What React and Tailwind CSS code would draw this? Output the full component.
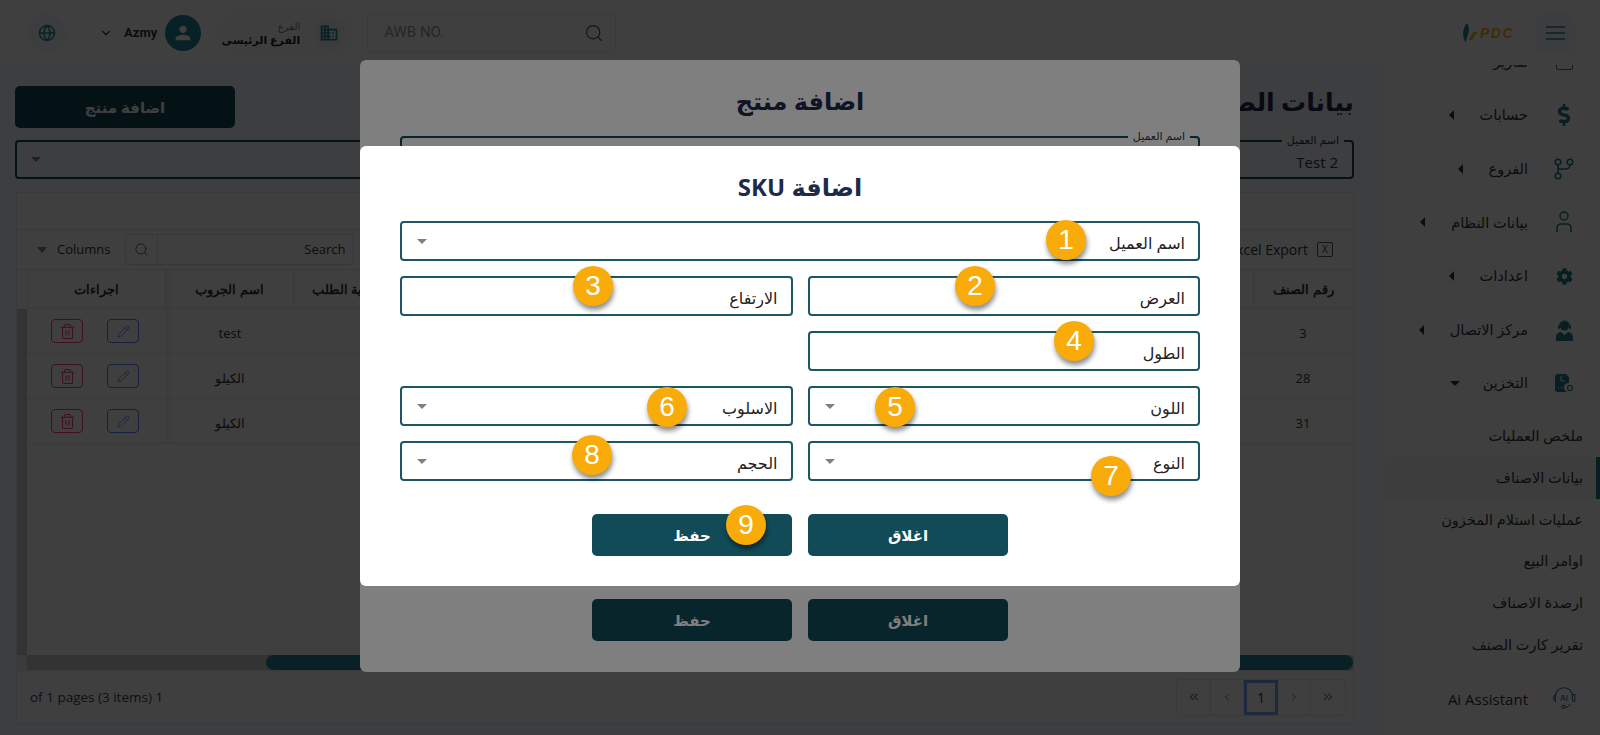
import React from 'react'
import { ChevronDown, ChevronLeft, ChevronRight, ChevronsLeft, ChevronsRight, Globe, Pencil, Search, Trash2 } from 'lucide-react'
import { FaCog, FaDollarSign } from 'react-icons/fa'
import { MdDomain, MdPerson } from 'react-icons/md'

const Caret = ({ dir = 'down', dark = false, className = '' }) => {
  if (dir === 'left') {
    return <span className={`inline-block w-0 h-0 border-y-[5px] border-y-transparent border-r-[5px] border-r-[#333] ${className}`}></span>
  }
  return <span className={`inline-block w-0 h-0 border-x-[5px] border-x-transparent border-t-[5px] ${dark ? 'border-t-[#333]' : 'border-t-[#808080]'} ${className}`}></span>
}

const BranchIcon = () => (
  <svg width="20" height="22" viewBox="0 0 20 22" fill="none" stroke="#1f7a8c" strokeWidth="1.6">
    <circle cx="4" cy="4" r="2.8" />
    <circle cx="16" cy="4" r="2.8" />
    <circle cx="4" cy="18" r="2.8" />
    <path d="M4 7v8M16 7c0 3-2 4-5 4H4" />
  </svg>
)

const UserLineIcon = () => (
  <svg width="16" height="22" viewBox="0 0 16 22" fill="none" stroke="#1f7a8c" strokeWidth="1.5">
    <circle cx="8" cy="5" r="4" />
    <path d="M1 21v-4c0-2.500 2-4 4-4h6c2 0 4 1.500 4 4v4" />
  </svg>
)

const AgentIcon = () => (
  <svg width="17" height="22" viewBox="0 0 17 22" fill="#1f7a8c">
    <circle cx="8.500" cy="7" r="4.500" />
    <path d="M3 7a5.500 5.500 0 0 1 11 0v2h-1V7a4.500 4.500 0 0 0-9 0v2H3z" />
    <rect x="2" y="6" width="2" height="4" rx="1" />
    <rect x="13" y="6" width="2" height="4" rx="1" />
    <path d="M0 22v-4c0-3 2.500-4.500 5-5l3.500 3 3.500-3c2.500.5 5 2 5 5v4z" />
  </svg>
)

const StorageIcon = () => (
  <svg width="18" height="18" viewBox="0 0 18 18">
    <path d="M3 0h8l3 3v6a4 4 0 0 0-1 9H3a3 3 0 0 1-3-3V3a3 3 0 0 1 3-3z" fill="#1f7a8c" />
    <path d="M6 2v5h4M3 14h1M6 14h1M9 14h1" stroke="#ffffff" strokeWidth="1" fill="none" />
    <circle cx="15" cy="14" r="2.500" fill="none" stroke="#1f7a8c" strokeWidth="1.2" />
  </svg>
)

const AiIcon = () => (
  <svg width="24" height="23" viewBox="0 0 21 20" fill="none" stroke="#1f7a8c" strokeWidth="0.9">
    <path d="M3 9V8a7.500 7.500 0 0 1 15 0v1" />
    <path d="M3 6.500 1 9.500 3 12.500zM18 6.500h2v6h-2z" />
    <path d="M16 15c-1 2-3 2.500-5 2.500" />
    <rect x="8.500" y="16" width="3" height="2.500" rx="1" />
    <text x="10.500" y="12" fontSize="7" fill="#1f7a8c" stroke="none" textAnchor="middle" fontFamily="Open Sans" fontWeight="600">AI</text>
  </svg>
)

const LogoPdc = () => (
  <div className="flex items-center w-[52px] h-[20px]" dir="ltr">
    <svg width="15" height="20" viewBox="0 0 15 20" className="shrink-0">
      <path d="M4 0c2.500 4 2.500 8 .5 13-1 2-1.500 4-1.500 7C-1 14-1 6 4 0z" fill="#22849a" />
      <path d="M14 9h-3.500l-5 8H9z" fill="#ffb31f" />
    </svg>
    <span className="ml-[2px] text-[14px] leading-none font-black italic text-[#ffb31f] font-['Liberation_Sans',sans-serif] tracking-[1.500px]">PDC</span>
  </div>
)

const menuItems = [
  { label: 'حسابات', icon: <FaDollarSign className="text-[#1f7a8c] text-[22px]" /> },
  { label: 'الفروع', icon: <BranchIcon /> },
  { label: 'بيانات النظام', icon: <UserLineIcon /> },
  { label: 'اعدادات', icon: <FaCog className="text-[#1f7a8c] text-[17px]" /> },
  { label: 'مركز الاتصال', icon: <AgentIcon /> },
]

const subItems = ['ملخص العمليات', 'بيانات الاصناف', 'عمليات استلام المخزون', 'اوامر البيع', 'ارصدة الاصناف', 'تقرير كارت الصنف']

const Sidebar = () => (
  <aside className="w-[220px] shrink-0 h-[670px] overflow-hidden bg-white text-[#333] text-[14.500px]" dir="rtl">
    <div className="-mt-[30px]">
      <div className="h-[53.500px] flex items-center">
        <span className="w-[17px] h-[16px] mr-[27px] border-[1.500px] border-[#1f7a8c] rounded-[2px]"></span>
        <span className="mr-[28px]">تقارير</span>
      </div>
      {menuItems.map((item) => (
        <div key={item.label} className="h-[53.600px] flex items-center">
          <span className="w-[24px] mr-[24px] flex justify-center">{item.icon}</span>
          <span className="mr-[24px] whitespace-nowrap">{item.label}</span>
          <Caret dir="left" className="mr-[26px]" />
        </div>
      ))}
      <div className="h-[53.600px] flex items-center">
        <span className="w-[24px] mr-[24px] flex justify-center"><StorageIcon /></span>
        <span className="mr-[24px]">التخزين</span>
        <Caret dark className="mr-[23px]" />
      </div>
      <div className="mt-[5px]">
        {subItems.map((label, i) => (
          <div key={label} className={`relative h-[41.800px] flex items-center pr-[17px] whitespace-nowrap ${i === 1 ? 'bg-[#f4f7fa] ml-[5px]' : ''}`}>
            {label}
            {i === 1 && <span className="absolute right-0 top-0 bottom-0 w-[4px] bg-[#1f7a8c]"></span>}
          </div>
        ))}
      </div>
      <div className="mt-[6px] h-[54px] flex items-center">
        <span className="w-[24px] mr-[24px] flex justify-center"><AiIcon /></span>
        <span className="mr-[24px] text-[15px] font-['Open_Sans',sans-serif]" dir="ltr">Ai Assistant</span>
      </div>
    </div>
  </aside>
)

const Header = () => (
  <header className="h-[65px] bg-white flex items-center justify-between pl-[27px] pr-[25px]" dir="ltr">
    <div className="flex items-center">
      <div className="w-[39px] h-[38px] rounded-full bg-[#f0f6f8] flex items-center justify-center">
        <Globe size={18} strokeWidth={2} className="text-[#22849a]" />
      </div>
      <ChevronDown size={14} className="ml-[33px] text-[#333]" />
      <span className="ml-[11px] text-[13px] font-bold text-[#333] font-['Roboto',sans-serif]">Azmy</span>
      <div className="ml-[8px] w-[36px] h-[36px] rounded-full bg-[#22849a] flex items-center justify-center">
        <MdPerson className="text-white text-[22px]" />
      </div>
      <div className="ml-[17px] w-[135px] h-[42px] rounded-full bg-[#f8fafb] flex items-center justify-end pr-[8px]">
        <div className="text-right leading-[14px] whitespace-nowrap" dir="rtl">
          <div className="text-[10px] text-[#777]">الفرع</div>
          <div className="text-[11px] font-bold text-[#222]">الفرع الرئيسى</div>
        </div>
        <div className="ml-[13px] w-[32px] h-[32px] rounded-full bg-[#eef3f3] flex items-center justify-center">
          <MdDomain className="text-[#22849a] text-[20px]" />
        </div>
      </div>
      <div className="ml-[14px] w-[249px] h-[38px] rounded-[4px] border border-[#e8e8e8] flex items-center justify-between pl-[16px] pr-[11px]">
        <span className="text-[15px] text-[#999] font-['Roboto',sans-serif]">AWB NO.</span>
        <Search size={20} strokeWidth={1.500} className="text-[#555]" />
      </div>
    </div>
    <div className="flex items-center">
      <LogoPdc />
      <div className="ml-[20px] w-[40px] h-[38px] rounded-lg bg-[#f3f7fa] flex items-center justify-center">
        <svg width="19" height="14" viewBox="0 0 19 14" stroke="#22849a" strokeWidth="1.500">
          <path d="M0 1h19M0 7h19M0 13h19" />
        </svg>
      </div>
    </div>
  </header>
)

const rows = [
  { group: 'test', sku: '3' },
  { group: 'الكيلو', sku: '28' },
  { group: 'الكيلو', sku: '31' },
]

const gridCols = 'grid grid-cols-[139px_128px_130px_1fr_100px]'

const DataTable = () => (
  <div className="ml-[1px] h-[532px] bg-white border border-[#e5e5e5] flex flex-col text-[13px] text-[#333] font-['Open_Sans',sans-serif]" dir="ltr">
    <div className="h-[37px] shrink-0 border-b border-[#e5e5e5]"></div>
    <div className="h-[40px] shrink-0 border-b border-[#e5e5e5] flex items-center pl-[20px] pr-[20px]">
      <Caret className="border-t-[6px]" />
      <span className="ml-[10px] text-[13px]">Columns</span>
      <div className="ml-[15px] w-[229px] h-[31px] border border-[#ddd] rounded-[4px] flex">
        <div className="w-[32px] border-r border-[#ddd] flex items-center justify-center">
          <Search size={15} strokeWidth={1.500} className="text-[#555]" />
        </div>
        <div className="flex-1 flex items-center justify-end pr-[8px] text-[13px]">Search</div>
      </div>
      <div className="ml-auto flex items-center">
        <span className="text-[14px]">Excel Export</span>
        <span className="ml-[9px] w-[16px] h-[15px] border border-[#555] rounded-[2px] flex items-center justify-center text-[10px] text-[#444]">X</span>
      </div>
    </div>
    <div className="flex-1 flex min-h-0">
      <div className="w-[10px] shrink-0 flex flex-col">
        <div className="h-[39px]"></div>
        <div className="flex-1 bg-[#cccccc]"></div>
      </div>
      <div className="flex-1">
        <div className={`${gridCols} h-[39px] border-b border-[#e5e5e5] font-semibold text-[13px]`}>
          <div className="border-x border-[#e5e5e5] flex items-center justify-center pt-[1px]">اجراءات</div>
          <div className="border-r border-[#e5e5e5] flex items-center justify-center pt-[1px] bg-[linear-gradient(to_right,#00000010,transparent_8px)]">اسم الجروب</div>
          <div className="flex items-center justify-start pl-[18px] pt-[1px] whitespace-nowrap">كمية الطلب</div>
          <div></div>
          <div className="border-l border-[#e5e5e5] flex items-center justify-center pt-[1px]">رقم الصنف</div>
        </div>
        {rows.map((row) => (
          <div key={row.sku} className={`${gridCols} h-[45px] border-b border-[#e5e5e5]`}>
            <div className="flex items-center pl-[24px] gap-[24px]">
              <button className="w-[32px] h-[24px] rounded-[4px] border border-[#ff3d71] flex items-center justify-center">
                <Trash2 size={17} strokeWidth={1.500} className="text-[#ff3d71]" />
              </button>
              <button className="w-[32px] h-[24px] rounded-[4px] border border-[#5a7ff5] flex items-center justify-center">
                <Pencil size={13} strokeWidth={1.500} className="text-[#5a7ff5]" />
              </button>
            </div>
            <div className="flex items-center justify-center pt-[5px] bg-[linear-gradient(to_right,#00000010,transparent_8px)]">{row.group}</div>
            <div></div>
            <div></div>
            <div className="flex items-center justify-center pt-[5px]">{row.sku}</div>
          </div>
        ))}
      </div>
    </div>
    <div className="h-[15px] shrink-0 flex">
      <div className="w-[10px] bg-[#eeeeee]"></div>
      <div className="flex-1 bg-[#cccccc] pl-[239px]">
        <div className="h-full rounded-full bg-[#22829a]"></div>
      </div>
    </div>
    <div className="h-[53px] shrink-0 border-t border-[#e5e5e5] flex items-center justify-between pl-[13px] pr-[7px]">
      <span className="text-[13.500px] text-[#444]">of 1 pages (3 items) 1</span>
      <div className="flex h-[37px] border border-[#e5e5e5] rounded-[4px] text-[#777]">
        <span className="w-[34px] flex items-center justify-center border-r border-[#e5e5e5]"><ChevronsLeft size={14} /></span>
        <span className="w-[33px] flex items-center justify-center border-r border-[#e5e5e5]"><ChevronLeft size={12} /></span>
        <span className="w-[34px] flex items-center justify-center border-[3px] border-[#7aa7ff] text-[#333] text-[14px]">1</span>
        <span className="w-[33px] flex items-center justify-center border-r border-[#e5e5e5]"><ChevronRight size={12} /></span>
        <span className="w-[34px] flex items-center justify-center"><ChevronsRight size={14} /></span>
      </div>
    </div>
  </div>
)

const NotchedSelect = ({ value }) => (
  <div className="relative h-[39px] border-2 border-[#124b58] rounded-[4px] flex items-center justify-between px-[14px]" dir="rtl">
    <span className="absolute -top-[9px] right-[8px] px-[5px] text-[11px] leading-[14px] text-[#333] bg-[#f0f8ff]">اسم العميل</span>
    <span className="text-[15px] pt-[6px] text-[#333] font-['Open_Sans',sans-serif]" dir="ltr">{value}</span>
    <Caret />
  </div>
)

const MainPanel = () => (
  <main className="flex-1 min-w-0 pl-[15px] pr-[26px] h-[670px] overflow-hidden bg-[#f0f8ff]">
    <div className="pt-[21px] h-[63px] flex items-start justify-between" dir="ltr">
      <button className="w-[220px] h-[42px] rounded-[5px] bg-[#124b58] text-white text-[15px] font-semibold">اضافة منتج</button>
      <h1 className="text-[25px] leading-[30px] font-bold text-[#1e2a4a] whitespace-nowrap" dir="rtl">بيانات الصنف</h1>
    </div>
    <div className="mt-[12px] grid grid-cols-2 gap-[16px]" dir="rtl">
      <NotchedSelect value="Test 2" />
      <NotchedSelect value="" />
    </div>
    <div className="mt-[13px]">
      <DataTable />
    </div>
  </main>
)

const Field = ({ label, select, className = '' }) => (
  <div className={`h-[40px] border-2 border-[#1d5763] rounded-[4px] flex items-center justify-between pr-[13px] pl-[15px] bg-white ${className}`}>
    <span className="text-[16px] text-[#222] pt-[3px]">{label}</span>
    {select && <Caret />}
  </div>
)

const ModalButtons = () => (
  <div className="flex justify-center gap-[16px]">
    <button className="w-[200px] h-[42px] rounded-[5px] bg-[#124b58] text-white text-[15px] font-semibold">اغلاق</button>
    <button className="w-[200px] h-[42px] rounded-[5px] bg-[#124b58] text-white text-[15px] font-semibold">حفظ</button>
  </div>
)

const ProductModal = () => (
  <div className="absolute left-[360px] top-[60px] w-[880px] h-[612px] bg-white rounded-[6px] px-[40px] pt-[24px]" dir="rtl">
    <h2 className="text-center text-[24px] leading-[34px] font-bold text-[#1e2a4a]">اضافة منتج</h2>
    <div className="mt-[18px] h-[39px] border-2 border-[#124b58] rounded-[4px] relative">
      <span className="absolute -top-[9px] right-[8px] px-[5px] bg-white text-[11px] leading-[14px] text-[#333]">اسم العميل</span>
    </div>
    <div className="mt-[424px]">
      <ModalButtons />
    </div>
  </div>
)

const SkuModal = () => (
  <div className="absolute left-[360px] top-[146px] w-[880px] h-[440px] bg-white rounded-[6px] px-[40px] pt-[24px]" dir="rtl">
    <h2 className="text-center text-[24px] leading-[34px] font-bold text-[#1e2a4a]">اضافة SKU</h2>
    <div className="mt-[17px] grid grid-cols-2 gap-x-[15px] gap-y-[15px]">
      <Field label="اسم العميل" select className="col-span-2" />
      <Field label="العرض" />
      <Field label="الارتفاع" />
      <Field label="الطول" />
      <div></div>
      <Field label="اللون" select />
      <Field label="الاسلوب" select />
      <Field label="النوع" select />
      <Field label="الحجم" select />
    </div>
    <div className="mt-[33px]">
      <ModalButtons />
    </div>
  </div>
)

const badges = [
  { n: 1, pos: 'left-[1046px] top-[220px]' },
  { n: 2, pos: 'left-[955px] top-[266px]' },
  { n: 3, pos: 'left-[573px] top-[266px]' },
  { n: 4, pos: 'left-[1054px] top-[321px]' },
  { n: 5, pos: 'left-[875px] top-[387px]' },
  { n: 6, pos: 'left-[647px] top-[387px]' },
  { n: 7, pos: 'left-[1091px] top-[456px]' },
  { n: 8, pos: 'left-[572px] top-[435px]' },
  { n: 9, pos: 'left-[726px] top-[505px]' },
]

const Badge = ({ n, pos }) => (
  <div className={`absolute ${pos} w-[40px] h-[40px] rounded-full bg-[#f9ab09] text-white text-[28px] flex items-center justify-center font-['Liberation_Sans',sans-serif] shadow-[1px_4px_5px_rgba(0,0,0,0.45)]`}>
    {n}
  </div>
)

export default function App() {
  return (
    <div className="relative w-[1600px] h-[735px] overflow-hidden bg-[#f0f8ff] font-['Noto_Sans','DejaVu_Sans',sans-serif]">
      <Header />
      <div className="flex" dir="ltr">
        <MainPanel />
        <Sidebar />
      </div>
      <div className="absolute inset-0 bg-black/50"></div>
      <ProductModal />
      <div className="absolute inset-0 bg-black/50"></div>
      <SkuModal />
      {badges.map((b) => (
        <Badge key={b.n} n={b.n} pos={b.pos} />
      ))}
    </div>
  )
}
